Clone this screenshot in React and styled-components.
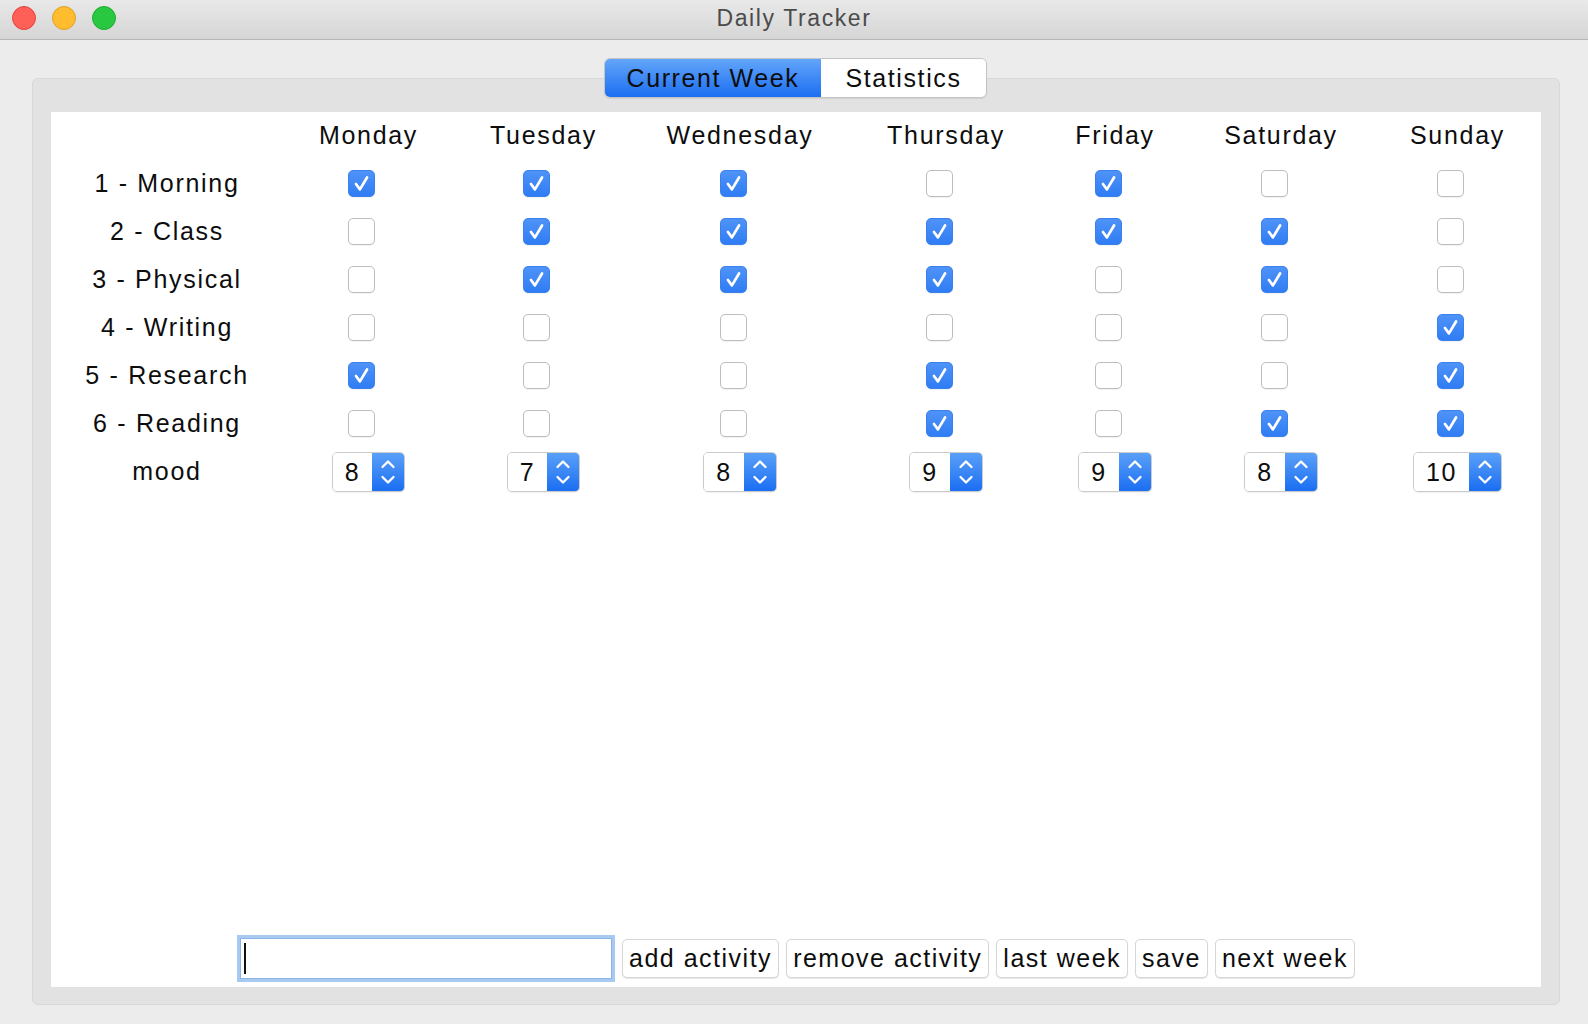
import React from "react";
import styled, { createGlobalStyle } from "styled-components";

const GlobalStyle = createGlobalStyle`
    html, body {
        margin: 0;
        padding: 0;
        background: #ececec;
    }
    * {
        box-sizing: border-box;
    }
`;

const Window = styled.div`
    width: 1588px;
    height: 1024px;
    display: flex;
    flex-direction: column;
    background: #ececec;
    font-family: "Liberation Sans", Arial, sans-serif;
    color: #111;
    overflow: hidden;
`;

const TitleBar = styled.div`
    height: 40px;
    flex-shrink: 0;
    display: grid;
    grid-template-columns: 1fr auto 1fr;
    align-items: center;
    background: linear-gradient(#e9e9e9, #d5d5d5);
    border-bottom: 1px solid #b6b6b6;
`;

const Lights = styled.div`
    display: flex;
    gap: 16px;
    padding-left: 12px;
    padding-bottom: 4px;
`;

const Light = styled.span`
    width: 24px;
    height: 24px;
    border-radius: 50%;
    background: ${p => p.color};
    border: 1px solid ${p => p.edge};
`;

const Title = styled.div`
    font-size: 23px;
    letter-spacing: 1.6px;
    color: #4b4b4b;
    padding-bottom: 3px;
`;

const Body = styled.div`
    flex: 1;
    display: flex;
    flex-direction: column;
    padding: 18px 28px 19px 32px;
`;

const Tabs = styled.div`
    align-self: center;
    display: flex;
    height: 40px;
    border: 1px solid #c4c4c4;
    border-radius: 6px;
    overflow: hidden;
    position: relative;
    z-index: 1;
    box-shadow: 0 1px 1px rgba(0, 0, 0, 0.08);
    margin-left: -2px;
`;

const Tab = styled.div`
    display: flex;
    align-items: center;
    padding: 0 ${p => (p.active ? 22 : 24)}px;
    font-size: 25px;
    letter-spacing: 1.6px;
    color: #0d0d0d;
    background: ${p => (p.active ? "linear-gradient(#62a5f9, #1c6ef2)" : "#fff")};
`;

const Pane = styled.div`
    flex: 1;
    margin-top: -20px;
    display: flex;
    flex-direction: column;
    padding: 33px 18px 17px 18px;
    background: #e2e2e2;
    border: 1px solid #d8d8d8;
    border-radius: 6px;
`;

const Sheet = styled.div`
    flex: 1;
    display: flex;
    flex-direction: column;
    background: #fff;
`;

const Grid = styled.div`
    display: grid;
    grid-template-columns: 232px 171px 179px 214px 198px 140px 192px 161px;
    grid-auto-rows: 48px;
    align-items: center;
    justify-items: center;
    margin-top: -1px;
`;

const Cell = styled.div`
    font-size: 25px;
    letter-spacing: 1.7px;
    color: #0d0d0d;
    white-space: nowrap;
`;

const Box = styled.div`
    width: 27px;
    height: 27px;
    margin-right: 14px;
    border-radius: 5px;
    display: flex;
    align-items: center;
    justify-content: center;
    background: ${p => (p.checked ? "linear-gradient(#4f93f7, #2f7cf4)" : "#fff")};
    border: 1px solid ${p => (p.checked ? "#3a80ef" : "#bdbdbd")};
    box-shadow: 0 1px 1px rgba(0, 0, 0, 0.06);
`;

const Spinner = styled.div`
    display: flex;
    height: 40px;
    margin-top: 2px;
    border: 1px solid #cbcbcb;
    border-radius: 5px;
    overflow: hidden;
    box-shadow: 0 1px 1px rgba(0, 0, 0, 0.06);
`;

const SpinValue = styled.div`
    min-width: 38px;
    padding: 0 12px;
    display: flex;
    align-items: center;
    justify-content: center;
    font-size: 25px;
    letter-spacing: 1.7px;
    color: #0d0d0d;
    background: #fff;
`;

const SpinArrows = styled.div`
    width: 32px;
    display: flex;
    align-items: center;
    justify-content: center;
    background: linear-gradient(#5aa0f8, #1b6ef2);
`;

const Footer = styled.div`
    margin-top: auto;
    display: flex;
    justify-content: center;
    align-items: center;
    gap: 7px;
    padding: 0 0 5px 0;
`;

const TextField = styled.div`
    width: 378px;
    height: 47px;
    display: flex;
    align-items: center;
    padding-left: 4px;
    background: #fff;
    border: 3px solid #a8c9f0;
    box-shadow: inset 0 0 0 1px #8db4e6;
`;

const Caret = styled.span`
    width: 2px;
    height: 31px;
    background: #111;
`;

const Button = styled.div`
    height: 39px;
    display: flex;
    align-items: center;
    padding: 0 6px;
    font-size: 25px;
    letter-spacing: 1.5px;
    color: #0d0d0d;
    background: #fff;
    border: 1px solid #d6d6d6;
    border-radius: 5px;
    box-shadow: 0 1px 1px rgba(0, 0, 0, 0.1);
`;

const days = ["Monday", "Tuesday", "Wednesday", "Thursday", "Friday", "Saturday", "Sunday"];

const activities = [
    { name: "1 - Morning", done: [1, 1, 1, 0, 1, 0, 0] },
    { name: "2 - Class", done: [0, 1, 1, 1, 1, 1, 0] },
    { name: "3 - Physical", done: [0, 1, 1, 1, 0, 1, 0] },
    { name: "4 - Writing", done: [0, 0, 0, 0, 0, 0, 1] },
    { name: "5 - Research", done: [1, 0, 0, 1, 0, 0, 1] },
    { name: "6 - Reading", done: [0, 0, 0, 1, 0, 1, 1] },
];

const mood = [8, 7, 8, 9, 9, 8, 10];

const Check = ({ checked }) => (
    <Box checked={checked}>
        {checked && (
            <svg width="27" height="27" viewBox="0 0 27 27">
                <path d="M7.5 14 L11.8 19.8 L19.5 7" fill="none" stroke="#fff" strokeWidth="2.9" strokeLinecap="round" strokeLinejoin="round" />
            </svg>
        )}
    </Box>
);

const Spin = ({ value }) => (
    <Spinner>
        <SpinValue>{value}</SpinValue>
        <SpinArrows>
            <svg width="16" height="34" viewBox="0 0 16 34">
                <path d="M2.5 12 L8 6.5 L13.5 12 M2.5 22 L8 27.5 L13.5 22" fill="none" stroke="#fff" strokeWidth="2.3" strokeLinecap="round" strokeLinejoin="round" />
            </svg>
        </SpinArrows>
    </Spinner>
);

export default function App() {
    return (
        <Window>
            <GlobalStyle />
            <TitleBar>
                <Lights>
                    <Light color="#fe5f57" edge="#e2463f" />
                    <Light color="#febc2e" edge="#e0a128" />
                    <Light color="#28c840" edge="#1fac2f" />
                </Lights>
                <Title>Daily Tracker</Title>
                <div />
            </TitleBar>
            <Body>
                <Tabs>
                    <Tab active>Current Week</Tab>
                    <Tab>Statistics</Tab>
                </Tabs>
                <Pane>
                    <Sheet>
                        <Grid>
                            <div />
                            {days.map(d => (
                                <Cell key={d}>{d}</Cell>
                            ))}
                            {activities.map(a => (
                                <React.Fragment key={a.name}>
                                    <Cell>{a.name}</Cell>
                                    {a.done.map((v, i) => (
                                        <Check key={i} checked={!!v} />
                                    ))}
                                </React.Fragment>
                            ))}
                            <Cell>mood</Cell>
                            {mood.map((m, i) => (
                                <Spin key={i} value={m} />
                            ))}
                        </Grid>
                        <Footer>
                            <TextField>
                                <Caret />
                            </TextField>
                            <Button>add activity</Button>
                            <Button>remove activity</Button>
                            <Button>last week</Button>
                            <Button>save</Button>
                            <Button>next week</Button>
                        </Footer>
                    </Sheet>
                </Pane>
            </Body>
        </Window>
    );
}
